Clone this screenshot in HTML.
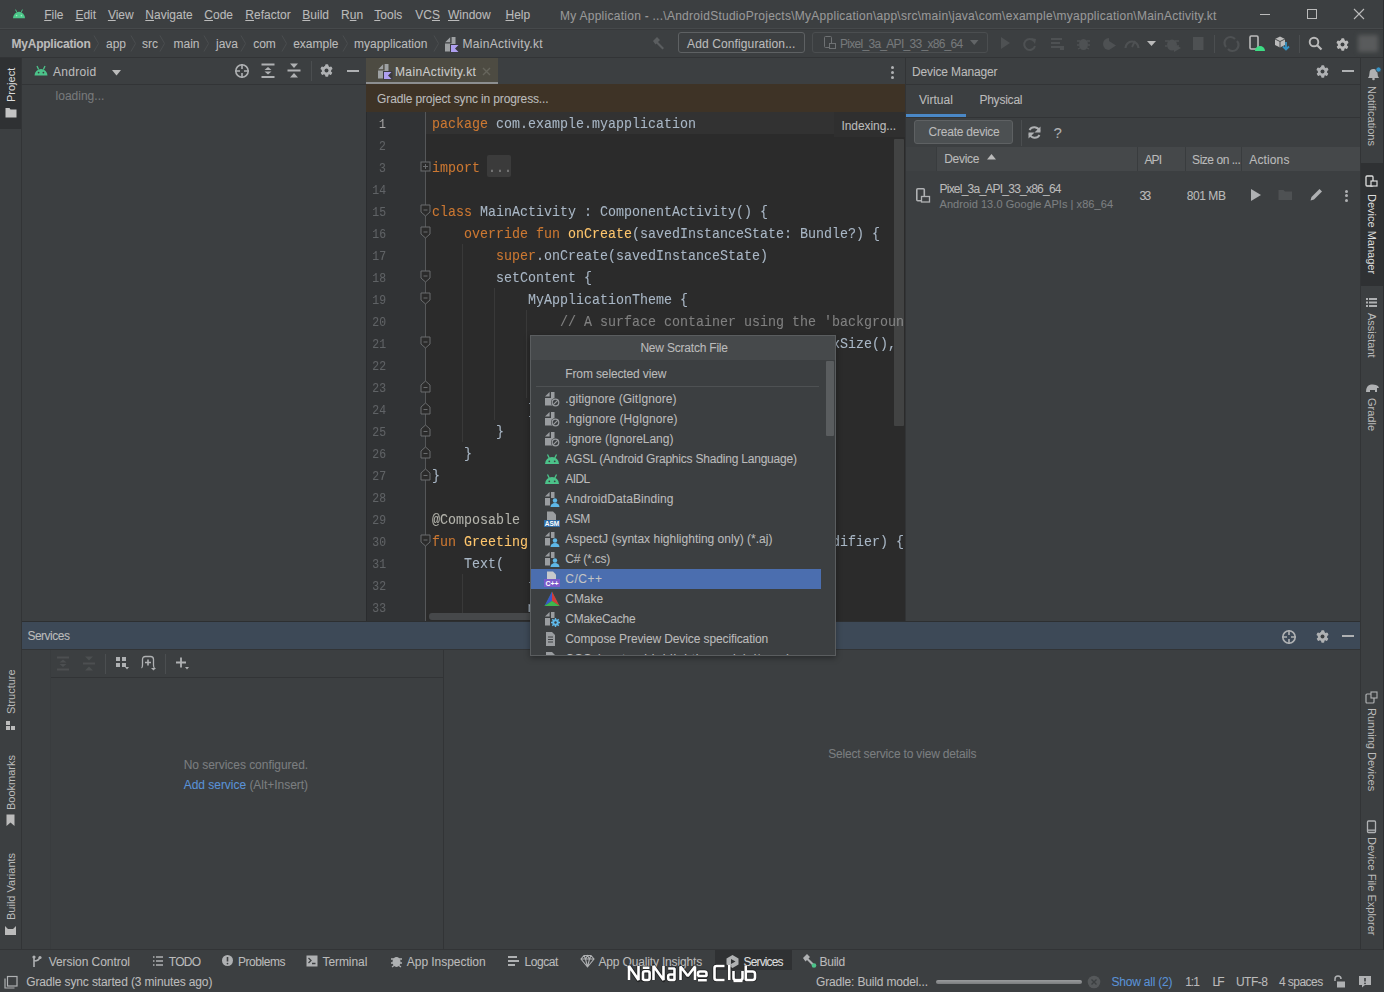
<!DOCTYPE html>
<html><head><meta charset="utf-8">
<style>
*{margin:0;padding:0;box-sizing:border-box}
html,body{width:1384px;height:992px;overflow:hidden;background:#3c3f41;font-family:"Liberation Sans",sans-serif;font-size:12px;color:#bbbbbb}
.a{position:absolute;white-space:nowrap;-webkit-text-stroke:0.08px currentColor}
.bx{position:absolute;overflow:visible}
.mono{font-family:"Liberation Mono",monospace}
u{text-decoration:underline;text-underline-offset:1px;text-decoration-thickness:1px}
.vt{position:absolute;white-space:nowrap;transform-origin:0 0;font-size:11px;line-height:12px}
</style></head>
<body>
<div class="bx" style="left:0px;top:0px;width:1384px;height:28px;background:#3c3f41;"></div>
<div class="bx" style="left:0px;top:28px;width:1384px;height:1px;background:#46494b;"></div>
<div class="bx" style="left:0px;top:29px;width:1384px;height:1px;background:#37393b;"></div>
<div class="bx" style="left:0px;top:30px;width:1384px;height:27px;background:#3c3f41;"></div>
<div class="bx" style="left:0px;top:57px;width:1384px;height:1px;background:#323436;"></div>
<svg class="bx" style="left:12px;top:8px;" width="14" height="12" viewBox="0 0 14 12"><path d="M1 10.3 A6 6.6 0 0 1 13 10.3 Z" fill="#4cc88a"/><path d="M3.6 1.6 L4.6 3.9 M10.4 1.6 L9.4 3.9" stroke="#4cc88a" stroke-width="1"/><circle cx="4.6" cy="7.6" r="0.8" fill="#9fe6c0"/><circle cx="9.4" cy="7.6" r="0.8" fill="#9fe6c0"/></svg>
<div class="a " style="left:44.2px;top:7.34px;font-size:12px;line-height:16px;color:#bbbbbb;"><u>F</u>ile</div>
<div class="a " style="left:75.4px;top:7.34px;font-size:12px;line-height:16px;color:#bbbbbb;"><u>E</u>dit</div>
<div class="a " style="left:107.9px;top:7.34px;font-size:12px;line-height:16px;color:#bbbbbb;"><u>V</u>iew</div>
<div class="a " style="left:145.3px;top:7.34px;font-size:12px;line-height:16px;color:#bbbbbb;"><u>N</u>avigate</div>
<div class="a " style="left:204.3px;top:7.34px;font-size:12px;line-height:16px;color:#bbbbbb;"><u>C</u>ode</div>
<div class="a " style="left:245.3px;top:7.34px;font-size:12px;line-height:16px;color:#bbbbbb;"><u>R</u>efactor</div>
<div class="a " style="left:302.3px;top:7.34px;font-size:12px;line-height:16px;color:#bbbbbb;"><u>B</u>uild</div>
<div class="a " style="left:341.1px;top:7.34px;font-size:12px;line-height:16px;color:#bbbbbb;">R<u>u</u>n</div>
<div class="a " style="left:374.3px;top:7.34px;font-size:12px;line-height:16px;color:#bbbbbb;"><u>T</u>ools</div>
<div class="a " style="left:415.3px;top:7.34px;font-size:12px;line-height:16px;color:#bbbbbb;">VC<u>S</u></div>
<div class="a " style="left:448.0px;top:7.34px;font-size:12px;line-height:16px;color:#bbbbbb;"><u>W</u>indow</div>
<div class="a " style="left:505.5px;top:7.34px;font-size:12px;line-height:16px;color:#bbbbbb;"><u>H</u>elp</div>
<div class="a " style="left:560.0px;top:7.84px;font-size:12px;line-height:16px;color:#999999;letter-spacing:0.264px;">My Application - ...\AndroidStudioProjects\MyApplication\app\src\main\java\com\example\myapplication\MainActivity.kt</div>
<div class="bx" style="left:1260px;top:14px;width:10px;height:1px;background:#bbbbbb;"></div>
<div class="bx" style="left:1307px;top:9px;width:10px;height:10px;background:transparent;border:1px solid #bbbbbb;"></div>
<svg class="bx" style="left:1353px;top:8px;" width="12" height="12" viewBox="0 0 12 12"><path d="M1 1 L11 11 M11 1 L1 11" stroke="#bbbbbb" stroke-width="1.1"/></svg>
<div class="a " style="left:11.5px;top:35.54px;font-size:12px;line-height:16px;color:#bbbbbb;font-weight:bold;letter-spacing:-0.225px;">MyApplication</div>
<svg class="bx" style="left:93.2px;top:35px;" width="7" height="17" viewBox="0 0 7 17"><path d="M1 0.5 L5.5 8.5 L1 16.5" fill="none" stroke="#4a4d4f" stroke-width="1"/></svg>
<svg class="bx" style="left:129.6px;top:35px;" width="7" height="17" viewBox="0 0 7 17"><path d="M1 0.5 L5.5 8.5 L1 16.5" fill="none" stroke="#4a4d4f" stroke-width="1"/></svg>
<svg class="bx" style="left:159px;top:35px;" width="7" height="17" viewBox="0 0 7 17"><path d="M1 0.5 L5.5 8.5 L1 16.5" fill="none" stroke="#4a4d4f" stroke-width="1"/></svg>
<svg class="bx" style="left:202.5px;top:35px;" width="7" height="17" viewBox="0 0 7 17"><path d="M1 0.5 L5.5 8.5 L1 16.5" fill="none" stroke="#4a4d4f" stroke-width="1"/></svg>
<svg class="bx" style="left:240.3px;top:35px;" width="7" height="17" viewBox="0 0 7 17"><path d="M1 0.5 L5.5 8.5 L1 16.5" fill="none" stroke="#4a4d4f" stroke-width="1"/></svg>
<svg class="bx" style="left:281.4px;top:35px;" width="7" height="17" viewBox="0 0 7 17"><path d="M1 0.5 L5.5 8.5 L1 16.5" fill="none" stroke="#4a4d4f" stroke-width="1"/></svg>
<svg class="bx" style="left:341.8px;top:35px;" width="7" height="17" viewBox="0 0 7 17"><path d="M1 0.5 L5.5 8.5 L1 16.5" fill="none" stroke="#4a4d4f" stroke-width="1"/></svg>
<svg class="bx" style="left:433.2px;top:35px;" width="7" height="17" viewBox="0 0 7 17"><path d="M1 0.5 L5.5 8.5 L1 16.5" fill="none" stroke="#4a4d4f" stroke-width="1"/></svg>
<div class="a " style="left:106.0px;top:35.54px;font-size:12px;line-height:16px;color:#bbbbbb;">app</div>
<div class="a " style="left:142.0px;top:35.54px;font-size:12px;line-height:16px;color:#bbbbbb;">src</div>
<div class="a " style="left:173.5px;top:35.54px;font-size:12px;line-height:16px;color:#bbbbbb;">main</div>
<div class="a " style="left:216.0px;top:35.54px;font-size:12px;line-height:16px;color:#bbbbbb;">java</div>
<div class="a " style="left:253.2px;top:35.54px;font-size:12px;line-height:16px;color:#bbbbbb;">com</div>
<div class="a " style="left:293.2px;top:35.54px;font-size:12px;line-height:16px;color:#bbbbbb;">example</div>
<div class="a " style="left:354.0px;top:35.54px;font-size:12px;line-height:16px;color:#bbbbbb;">myapplication</div>
<svg class="bx" style="left:444px;top:36px;" width="16" height="17" viewBox="0 0 16 17"><path d="M1.2 6.2 L6.2 1.2 V6.2 Z" fill="#9ea1a3"/><path d="M1 7.6 H7.6 V1 H11.5 V15.5 H1 Z" fill="#9ea1a3"/><rect x="6" y="8" width="9.5" height="8.5" fill="#3a3a40"/><path d="M7 9 H14.5 L11 12.6 L14.5 16 H7 Z" fill="#ae9ff0"/></svg>
<div class="a " style="left:462.5px;top:35.54px;font-size:12px;line-height:16px;color:#bbbbbb;letter-spacing:0.308px;">MainActivity.kt</div>
<svg class="bx" style="left:651px;top:36px;" width="15" height="15" viewBox="0 0 15 15"><path d="M2 5 L6 1 L9 4 L7 6 L13 12 L11.5 13.5 L5.5 7.5 L4.5 8.5 Z" fill="#5b5e60"/></svg>
<div class="bx" style="left:678px;top:32px;width:127px;height:21px;background:transparent;border:1px solid #5e6163;border-radius:3px;"></div>
<div class="a " style="left:687.0px;top:35.84px;font-size:12px;line-height:16px;color:#bbbbbb;letter-spacing:0.123px;">Add Configuration...</div>
<div class="bx" style="left:812px;top:32px;width:176px;height:21px;background:transparent;border:1px solid #4b4e50;border-radius:3px;"></div>
<svg class="bx" style="left:823px;top:36px;" width="14" height="14" viewBox="0 0 14 14"><rect x="1.5" y="0.5" width="7" height="11" rx="1" fill="none" stroke="#6e7173"/><rect x="6.5" y="7.5" width="6" height="5" fill="#3c3f41" stroke="#6e7173"/></svg>
<div class="a " style="left:840.0px;top:35.84px;font-size:12px;line-height:16px;color:#76797b;letter-spacing:-0.710px;">Pixel_3a_API_33_x86_64</div>
<svg class="bx" style="left:970px;top:40px;" width="9" height="6" viewBox="0 0 9 6"><path d="M0 0 H8.5 L4.25 5 Z" fill="#626567"/></svg>
<svg class="bx" style="left:1000px;top:37px;" width="11" height="12" viewBox="0 0 11 12"><path d="M1 0 L10 6 L1 12 Z" fill="#4e5153"/></svg>
<svg class="bx" style="left:1023px;top:37px;" width="15" height="14" viewBox="0 0 15 14"><path d="M11 4 A5.5 5.5 0 1 0 12 9" fill="none" stroke="#4e5153" stroke-width="2"/><path d="M8 1 L13 2 L12 7 Z" fill="#4e5153"/></svg>
<svg class="bx" style="left:1050px;top:37px;" width="15" height="14" viewBox="0 0 15 14"><rect x="1" y="1" width="11" height="2" fill="#4e5153"/><rect x="1" y="5" width="9" height="2" fill="#4e5153"/><rect x="1" y="9" width="11" height="2" fill="#4e5153"/><rect x="10" y="9" width="4" height="4" fill="#4e5153"/></svg>
<svg class="bx" style="left:1076px;top:36px;" width="15" height="15" viewBox="0 0 15 15"><ellipse cx="7.5" cy="8.5" rx="4.5" ry="5.5" fill="#4e5153"/><path d="M1 5 H4 M11 5 H14 M1 9 H3 M12 9 H14 M2 13 L4 12 M13 13 L11 12" stroke="#4e5153" stroke-width="1.3"/></svg>
<svg class="bx" style="left:1101px;top:36px;" width="16" height="15" viewBox="0 0 16 15"><path d="M8 2 A6 6 0 1 0 8 14 Z" fill="#4e5153"/><path d="M8 5 L15 9.5 L8 14 Z" fill="#4e5153"/></svg>
<svg class="bx" style="left:1124px;top:37px;" width="17" height="13" viewBox="0 0 17 13"><path d="M1.5 11 A6.5 6.5 0 0 1 14.5 11" fill="none" stroke="#4e5153" stroke-width="2.2"/><path d="M8 10 L11 4" stroke="#4e5153" stroke-width="1.8"/></svg>
<svg class="bx" style="left:1147px;top:41px;" width="10" height="6" viewBox="0 0 10 6"><path d="M0 0 H9 L4.5 5 Z" fill="#bbbbbb"/></svg>
<svg class="bx" style="left:1165px;top:36px;" width="16" height="16" viewBox="0 0 16 16"><ellipse cx="7" cy="9" rx="5" ry="5.5" fill="#4e5153"/><path d="M0 5 H4 M10 5 H14 M0 10 H2 M12 10 H14" stroke="#4e5153" stroke-width="1.3"/><path d="M9 8 L16 12 L9 16 Z" fill="#4e5153"/></svg>
<svg class="bx" style="left:1193px;top:37px;" width="11" height="13" viewBox="0 0 11 13"><rect x="0" y="0" width="10.5" height="13" fill="#4e5153"/></svg>
<div class="bx" style="left:1214px;top:35px;width:1px;height:18px;background:#4b4e50;"></div>
<svg class="bx" style="left:1223px;top:36px;" width="17" height="16" viewBox="0 0 17 16"><path d="M3 11 A6 6 0 0 1 12 3" fill="none" stroke="#4e5153" stroke-width="2.2"/><path d="M14 5 A6 6 0 0 1 5 13" fill="none" stroke="#4e5153" stroke-width="2.2"/></svg>
<svg class="bx" style="left:1249px;top:35px;" width="16" height="17" viewBox="0 0 16 17"><rect x="1" y="1" width="8" height="13" rx="1.2" fill="none" stroke="#bbbbbb" stroke-width="1.6"/><path d="M6 16 A5 5 0 0 1 16 16 Z" fill="#3ddc84"/></svg>
<svg class="bx" style="left:1274px;top:35px;" width="17" height="17" viewBox="0 0 17 17"><path d="M1 4 L6 1.5 L11 4 L11 10 L6 12.5 L1 10 Z" fill="#bbbbbb"/><path d="M6 6.5 V12.5 M1 4 L6 6.5 L11 4" stroke="#3c3f41" stroke-width="0.9" fill="none"/><path d="M12 7 V14 M9 11.5 L12 14.5 L15 11.5" stroke="#3592c4" stroke-width="1.8" fill="none"/></svg>
<div class="bx" style="left:1299px;top:35px;width:1px;height:18px;background:#4b4e50;"></div>
<svg class="bx" style="left:1308px;top:36px;" width="15" height="15" viewBox="0 0 15 15"><circle cx="6" cy="6" r="4.3" fill="none" stroke="#bbbbbb" stroke-width="1.9"/><path d="M9.2 9.2 L13.5 13.5" stroke="#bbbbbb" stroke-width="2.2"/></svg>
<svg class="bx" style="left:1335.5px;top:37.5px;" width="13" height="13" viewBox="0 0 13 13"><rect x="5.15" y="0.3" width="3.2" height="12.40" rx="1" fill="#bbbbbb" transform="rotate(0 6.5 6.5)"/><rect x="5.15" y="0.3" width="3.2" height="12.40" rx="1" fill="#bbbbbb" transform="rotate(60 6.5 6.5)"/><rect x="5.15" y="0.3" width="3.2" height="12.40" rx="1" fill="#bbbbbb" transform="rotate(120 6.5 6.5)"/><circle cx="6.5" cy="6.5" r="4.68" fill="#bbbbbb"/><circle cx="6.5" cy="6.5" r="1.95" fill="#3c3f41"/></svg>
<div class="bx" style="left:1358px;top:35px;width:20px;height:17px;background:#595b5c;filter:blur(2px);"></div>
<div class="bx" style="left:0px;top:58px;width:21px;height:892px;background:#3c3f41;"></div>
<div class="bx" style="left:21px;top:58px;width:1px;height:892px;background:#323436;"></div>
<div class="bx" style="left:0px;top:58px;width:21px;height:71px;background:#2f3133;"></div>
<div class="vt" style="left:5px;top:102px;color:#dddddd;font-size:11px;transform:rotate(-90deg)">Project</div>
<svg class="bx" style="left:5px;top:107px;" width="12" height="11" viewBox="0 0 12 11"><path d="M0.5 1 H4.5 L5.5 2.5 H11.5 V10.5 H0.5 Z" fill="#c4c4c4"/></svg>
<div class="vt" style="left:5px;top:714px;color:#bbbbbb;font-size:11px;transform:rotate(-90deg)">Structure</div>
<svg class="bx" style="left:5px;top:720px;" width="11" height="11" viewBox="0 0 11 11"><rect x="1" y="1" width="4" height="4" fill="#bbbbbb"/><rect x="6" y="6" width="4" height="4" fill="#bbbbbb"/><rect x="1" y="6" width="4" height="4" fill="#bbbbbb"/></svg>
<div class="vt" style="left:5px;top:809.5px;color:#bbbbbb;font-size:11px;transform:rotate(-90deg)">Bookmarks</div>
<svg class="bx" style="left:5px;top:814px;" width="11" height="13" viewBox="0 0 11 13"><path d="M1.5 0.5 H9.5 V12 L5.5 8.5 L1.5 12 Z" fill="#bbbbbb"/></svg>
<div class="vt" style="left:5px;top:920px;color:#bbbbbb;font-size:11px;transform:rotate(-90deg)">Build Variants</div>
<svg class="bx" style="left:4px;top:924px;" width="13" height="12" viewBox="0 0 13 12"><path d="M1 2 L4 5 H9 L12 2 V11 H1 Z" fill="#bbbbbb"/></svg>
<div class="bx" style="left:22px;top:58px;width:344px;height:564px;background:#3c3f41;"></div>
<div class="bx" style="left:22px;top:84px;width:344px;height:1px;background:#323436;"></div>
<svg class="bx" style="left:34px;top:65px;" width="14" height="11" viewBox="0 0 14 11"><path d="M0.5 10.5 A6.5 6.5 0 0 1 13.5 10.5 Z" fill="#4cc38a"/><line x1="3" y1="1" x2="4.6" y2="4.5" stroke="#4cc38a" stroke-width="1.3"/><line x1="11" y1="1" x2="9.4" y2="4.5" stroke="#4cc38a" stroke-width="1.3"/><circle cx="4.6" cy="7.6" r="0.9" fill="#3c3f41"/><circle cx="9.4" cy="7.6" r="0.9" fill="#3c3f41"/></svg>
<div class="a " style="left:53.0px;top:64.04px;font-size:12px;line-height:16px;color:#bbbbbb;letter-spacing:0.306px;">Android</div>
<svg class="bx" style="left:111.5px;top:69.5px;" width="9" height="6" viewBox="0 0 9 6"><path d="M0 0 H9 L4.5 5.5 Z" fill="#bbbbbb"/></svg>
<svg class="bx" style="left:234px;top:63px;" width="16" height="16" viewBox="0 0 16 16"><circle cx="8" cy="8" r="6.2" fill="none" stroke="#afb1b3" stroke-width="1.6"/><path d="M8 1 V6 M8 10 V15 M1 8 H6 M10 8 H15" stroke="#afb1b3" stroke-width="1.6"/></svg>
<svg class="bx" style="left:261px;top:63px;" width="14" height="16" viewBox="0 0 14 16"><rect x="0.5" y="0.5" width="13" height="2" fill="#afb1b3"/><rect x="0.5" y="13" width="13" height="2" fill="#afb1b3"/><path d="M3.5 7 L7 4 L10.5 7 Z M3.5 8.5 L7 11.5 L10.5 8.5 Z" fill="#afb1b3"/></svg>
<svg class="bx" style="left:287px;top:63px;" width="14" height="16" viewBox="0 0 14 16"><rect x="0.5" y="6.5" width="13" height="2" fill="#afb1b3"/><path d="M3 0.5 H11 L7 5 Z M3 14.5 H11 L7 10 Z" fill="#afb1b3"/></svg>
<div class="bx" style="left:311px;top:61px;width:1px;height:20px;background:#4b4e50;"></div>
<svg class="bx" style="left:320px;top:64px;" width="13" height="13" viewBox="0 0 13 13"><rect x="5.15" y="0.3" width="3.2" height="12.40" rx="1" fill="#afb1b3" transform="rotate(0 6.5 6.5)"/><rect x="5.15" y="0.3" width="3.2" height="12.40" rx="1" fill="#afb1b3" transform="rotate(60 6.5 6.5)"/><rect x="5.15" y="0.3" width="3.2" height="12.40" rx="1" fill="#afb1b3" transform="rotate(120 6.5 6.5)"/><circle cx="6.5" cy="6.5" r="4.68" fill="#afb1b3"/><circle cx="6.5" cy="6.5" r="1.95" fill="#3c3f41"/></svg>
<div class="bx" style="left:346.5px;top:70px;width:12.5px;height:2px;background:#afb1b3;"></div>
<div class="a " style="left:55.6px;top:87.84px;font-size:12px;line-height:16px;color:#787a7c;letter-spacing:-0.000px;">loading...</div>
<div class="bx" style="left:366px;top:58px;width:539px;height:27px;background:#3c3f41;"></div>
<div class="bx" style="left:366px;top:58px;width:132px;height:27px;background:#4d4b42;"></div>
<div class="bx" style="left:366px;top:82px;width:132px;height:3px;background:#8c8e90;"></div>
<svg class="bx" style="left:377px;top:63px;" width="16" height="17" viewBox="0 0 16 17"><path d="M1.2 6.2 L6.2 1.2 V6.2 Z" fill="#9ea1a3"/><path d="M1 7.6 H7.6 V1 H11.5 V15.5 H1 Z" fill="#9ea1a3"/><rect x="6" y="8" width="9.5" height="8.5" fill="#3a3a40"/><path d="M7 9 H14.5 L11 12.6 L14.5 16 H7 Z" fill="#ae9ff0"/></svg>
<div class="a " style="left:395.0px;top:64.34px;font-size:12px;line-height:16px;color:#cccccc;letter-spacing:0.365px;">MainActivity.kt</div>
<svg class="bx" style="left:482px;top:67px;" width="9" height="9" viewBox="0 0 9 9"><path d="M1 1 L8 8 M8 1 L1 8" stroke="#66655c" stroke-width="1.4"/></svg>
<div class="bx" style="left:891px;top:66px;width:3px;height:3px;background:#afb1b3;border-radius:50%;"></div>
<div class="bx" style="left:891px;top:71px;width:3px;height:3px;background:#afb1b3;border-radius:50%;"></div>
<div class="bx" style="left:891px;top:76px;width:3px;height:3px;background:#afb1b3;border-radius:50%;"></div>
<div class="bx" style="left:366px;top:84px;width:539px;height:28px;background:#3e3326;"></div>
<div class="a " style="left:377.1px;top:91.34px;font-size:12px;line-height:16px;color:#bbbbbb;letter-spacing:-0.139px;">Gradle project sync in progress...</div>
<div class="bx" style="left:366px;top:112px;width:539px;height:510px;background:#2b2b2b;"></div>
<div class="bx" style="left:366px;top:112px;width:60px;height:510px;background:#313335;"></div>
<div class="bx" style="left:425px;top:112px;width:1px;height:510px;background:#555759;"></div>
<div class="bx" style="left:366px;top:112px;width:1px;height:510px;background:#2a2c2e;"></div>
<div class="bx" style="left:426px;top:112px;width:478px;height:22px;background:#323232;"></div>
<div class="bx" style="left:426px;top:112px;width:478px;height:510px;overflow:hidden">
<div class="bx" style="left:61px;top:43px;width:24px;height:22px;background:#3b3b3b;border-radius:2px"></div>
<div class="bx" style="left:36px;top:132px;width:1px;height:198px;background:#393939"></div>
<div class="bx" style="left:68px;top:176px;width:1px;height:132px;background:#393939"></div>
<div class="bx" style="left:100px;top:198px;width:1px;height:88px;background:#393939"></div>
<div class="bx" style="left:36px;top:462px;width:1px;height:44px;background:#393939"></div>
<div class="a mono" style="left:6px;top:5px;font-size:13.33px;line-height:16px;transform:scaleY(1.11);transform-origin:0 11px"><span style="color:#cc7832">package&nbsp;</span><span style="color:#a9b7c6">com.example.myapplication</span></div>
<div class="a mono" style="left:6px;top:27px;font-size:13.33px;line-height:16px;transform:scaleY(1.11);transform-origin:0 11px"></div>
<div class="a mono" style="left:6px;top:49px;font-size:13.33px;line-height:16px;transform:scaleY(1.11);transform-origin:0 11px"><span style="color:#cc7832">import&nbsp;</span><span style="color:#808080">...</span></div>
<div class="a mono" style="left:6px;top:71px;font-size:13.33px;line-height:16px;transform:scaleY(1.11);transform-origin:0 11px"></div>
<div class="a mono" style="left:6px;top:93px;font-size:13.33px;line-height:16px;transform:scaleY(1.11);transform-origin:0 11px"><span style="color:#cc7832">class&nbsp;</span><span style="color:#a9b7c6">MainActivity&nbsp;:&nbsp;ComponentActivity()&nbsp;{</span></div>
<div class="a mono" style="left:6px;top:115px;font-size:13.33px;line-height:16px;transform:scaleY(1.11);transform-origin:0 11px"><span style="color:#cc7832">&nbsp;&nbsp;&nbsp;&nbsp;override&nbsp;fun&nbsp;</span><span style="color:#ffc66d">onCreate</span><span style="color:#a9b7c6">(savedInstanceState:&nbsp;Bundle?)&nbsp;{</span></div>
<div class="a mono" style="left:6px;top:137px;font-size:13.33px;line-height:16px;transform:scaleY(1.11);transform-origin:0 11px"><span style="color:#cc7832">&nbsp;&nbsp;&nbsp;&nbsp;&nbsp;&nbsp;&nbsp;&nbsp;super</span><span style="color:#a9b7c6">.onCreate(savedInstanceState)</span></div>
<div class="a mono" style="left:6px;top:159px;font-size:13.33px;line-height:16px;transform:scaleY(1.11);transform-origin:0 11px"><span style="color:#a9b7c6">&nbsp;&nbsp;&nbsp;&nbsp;&nbsp;&nbsp;&nbsp;&nbsp;setContent&nbsp;{</span></div>
<div class="a mono" style="left:6px;top:181px;font-size:13.33px;line-height:16px;transform:scaleY(1.11);transform-origin:0 11px"><span style="color:#a9b7c6">&nbsp;&nbsp;&nbsp;&nbsp;&nbsp;&nbsp;&nbsp;&nbsp;&nbsp;&nbsp;&nbsp;&nbsp;MyApplicationTheme&nbsp;{</span></div>
<div class="a mono" style="left:6px;top:203px;font-size:13.33px;line-height:16px;transform:scaleY(1.11);transform-origin:0 11px"><span style="color:#808080">&nbsp;&nbsp;&nbsp;&nbsp;&nbsp;&nbsp;&nbsp;&nbsp;&nbsp;&nbsp;&nbsp;&nbsp;&nbsp;&nbsp;&nbsp;&nbsp;//&nbsp;A&nbsp;surface&nbsp;container&nbsp;using&nbsp;the&nbsp;'background'&nbsp;color&nbsp;from&nbsp;the&nbsp;theme</span></div>
<div class="a mono" style="left:6px;top:225px;font-size:13.33px;line-height:16px;transform:scaleY(1.11);transform-origin:0 11px"><span style="color:#a9b7c6">&nbsp;&nbsp;&nbsp;&nbsp;&nbsp;&nbsp;&nbsp;&nbsp;&nbsp;&nbsp;&nbsp;&nbsp;&nbsp;&nbsp;&nbsp;&nbsp;Surface(modifier&nbsp;=&nbsp;Modifier.fillMaxSize(),&nbsp;</span><span style="color:#cc7832">color</span></div>
<div class="a mono" style="left:6px;top:247px;font-size:13.33px;line-height:16px;transform:scaleY(1.11);transform-origin:0 11px"></div>
<div class="a mono" style="left:6px;top:269px;font-size:13.33px;line-height:16px;transform:scaleY(1.11);transform-origin:0 11px"></div>
<div class="a mono" style="left:6px;top:291px;font-size:13.33px;line-height:16px;transform:scaleY(1.11);transform-origin:0 11px"><span style="color:#a9b7c6">&nbsp;&nbsp;&nbsp;&nbsp;&nbsp;&nbsp;&nbsp;&nbsp;&nbsp;&nbsp;&nbsp;&nbsp;}</span></div>
<div class="a mono" style="left:6px;top:313px;font-size:13.33px;line-height:16px;transform:scaleY(1.11);transform-origin:0 11px"><span style="color:#a9b7c6">&nbsp;&nbsp;&nbsp;&nbsp;&nbsp;&nbsp;&nbsp;&nbsp;}</span></div>
<div class="a mono" style="left:6px;top:335px;font-size:13.33px;line-height:16px;transform:scaleY(1.11);transform-origin:0 11px"><span style="color:#a9b7c6">&nbsp;&nbsp;&nbsp;&nbsp;}</span></div>
<div class="a mono" style="left:6px;top:357px;font-size:13.33px;line-height:16px;transform:scaleY(1.11);transform-origin:0 11px"><span style="color:#a9b7c6">}</span></div>
<div class="a mono" style="left:6px;top:379px;font-size:13.33px;line-height:16px;transform:scaleY(1.11);transform-origin:0 11px"></div>
<div class="a mono" style="left:6px;top:401px;font-size:13.33px;line-height:16px;transform:scaleY(1.11);transform-origin:0 11px"><span style="color:#b4b4ac">@Composable</span></div>
<div class="a mono" style="left:6px;top:423px;font-size:13.33px;line-height:16px;transform:scaleY(1.11);transform-origin:0 11px"><span style="color:#cc7832">fun&nbsp;</span><span style="color:#ffc66d">Greeting</span><span style="color:#a9b7c6">(name:&nbsp;String,&nbsp;modifier:&nbsp;Modifier&nbsp;=&nbsp;Modifier)&nbsp;{</span></div>
<div class="a mono" style="left:6px;top:445px;font-size:13.33px;line-height:16px;transform:scaleY(1.11);transform-origin:0 11px"><span style="color:#a9b7c6">&nbsp;&nbsp;&nbsp;&nbsp;Text(</span></div>
<div class="a mono" style="left:6px;top:467px;font-size:13.33px;line-height:16px;transform:scaleY(1.11);transform-origin:0 11px"><span style="color:#a9b7c6">&nbsp;&nbsp;&nbsp;&nbsp;&nbsp;&nbsp;&nbsp;&nbsp;&nbsp;&nbsp;&nbsp;&nbsp;text&nbsp;=&nbsp;"Hello&nbsp;$name!",</span></div>
<div class="a mono" style="left:6px;top:489px;font-size:13.33px;line-height:16px;transform:scaleY(1.11);transform-origin:0 11px"><span style="color:#a9b7c6">&nbsp;&nbsp;&nbsp;&nbsp;&nbsp;&nbsp;&nbsp;&nbsp;&nbsp;&nbsp;&nbsp;&nbsp;modifier&nbsp;=&nbsp;modifier</span></div>
</div>
<div class="a mono" style="left:379.1px;top:118px;font-size:11.4px;line-height:14px;color:#a4a3a3;transform:scaleY(1.2);transform-origin:0 10px">1</div>
<div class="a mono" style="left:379.1px;top:140px;font-size:11.4px;line-height:14px;color:#606366;transform:scaleY(1.2);transform-origin:0 10px">2</div>
<div class="a mono" style="left:379.1px;top:162px;font-size:11.4px;line-height:14px;color:#606366;transform:scaleY(1.2);transform-origin:0 10px">3</div>
<div class="a mono" style="left:372.3px;top:184px;font-size:11.4px;line-height:14px;color:#606366;transform:scaleY(1.2);transform-origin:0 10px">14</div>
<div class="a mono" style="left:372.3px;top:206px;font-size:11.4px;line-height:14px;color:#606366;transform:scaleY(1.2);transform-origin:0 10px">15</div>
<div class="a mono" style="left:372.3px;top:228px;font-size:11.4px;line-height:14px;color:#606366;transform:scaleY(1.2);transform-origin:0 10px">16</div>
<div class="a mono" style="left:372.3px;top:250px;font-size:11.4px;line-height:14px;color:#606366;transform:scaleY(1.2);transform-origin:0 10px">17</div>
<div class="a mono" style="left:372.3px;top:272px;font-size:11.4px;line-height:14px;color:#606366;transform:scaleY(1.2);transform-origin:0 10px">18</div>
<div class="a mono" style="left:372.3px;top:294px;font-size:11.4px;line-height:14px;color:#606366;transform:scaleY(1.2);transform-origin:0 10px">19</div>
<div class="a mono" style="left:372.3px;top:316px;font-size:11.4px;line-height:14px;color:#606366;transform:scaleY(1.2);transform-origin:0 10px">20</div>
<div class="a mono" style="left:372.3px;top:338px;font-size:11.4px;line-height:14px;color:#606366;transform:scaleY(1.2);transform-origin:0 10px">21</div>
<div class="a mono" style="left:372.3px;top:360px;font-size:11.4px;line-height:14px;color:#606366;transform:scaleY(1.2);transform-origin:0 10px">22</div>
<div class="a mono" style="left:372.3px;top:382px;font-size:11.4px;line-height:14px;color:#606366;transform:scaleY(1.2);transform-origin:0 10px">23</div>
<div class="a mono" style="left:372.3px;top:404px;font-size:11.4px;line-height:14px;color:#606366;transform:scaleY(1.2);transform-origin:0 10px">24</div>
<div class="a mono" style="left:372.3px;top:426px;font-size:11.4px;line-height:14px;color:#606366;transform:scaleY(1.2);transform-origin:0 10px">25</div>
<div class="a mono" style="left:372.3px;top:448px;font-size:11.4px;line-height:14px;color:#606366;transform:scaleY(1.2);transform-origin:0 10px">26</div>
<div class="a mono" style="left:372.3px;top:470px;font-size:11.4px;line-height:14px;color:#606366;transform:scaleY(1.2);transform-origin:0 10px">27</div>
<div class="a mono" style="left:372.3px;top:492px;font-size:11.4px;line-height:14px;color:#606366;transform:scaleY(1.2);transform-origin:0 10px">28</div>
<div class="a mono" style="left:372.3px;top:514px;font-size:11.4px;line-height:14px;color:#606366;transform:scaleY(1.2);transform-origin:0 10px">29</div>
<div class="a mono" style="left:372.3px;top:536px;font-size:11.4px;line-height:14px;color:#606366;transform:scaleY(1.2);transform-origin:0 10px">30</div>
<div class="a mono" style="left:372.3px;top:558px;font-size:11.4px;line-height:14px;color:#606366;transform:scaleY(1.2);transform-origin:0 10px">31</div>
<div class="a mono" style="left:372.3px;top:580px;font-size:11.4px;line-height:14px;color:#606366;transform:scaleY(1.2);transform-origin:0 10px">32</div>
<div class="a mono" style="left:372.3px;top:602px;font-size:11.4px;line-height:14px;color:#606366;transform:scaleY(1.2);transform-origin:0 10px">33</div>
<svg class="bx" style="left:420px;top:161px;" width="11" height="11" viewBox="0 0 11 11"><rect x="1" y="1" width="9" height="9" fill="#2b2b2b" stroke="#6a6c6e"/><path d="M3 5.5 H8 M5.5 3 V8" stroke="#6a6c6e"/></svg>
<svg class="bx" style="left:420px;top:204px;" width="11" height="13" viewBox="0 0 11 13"><path d="M1 1 H10 V8 L5.5 12 L1 8 Z" fill="#2b2b2b" stroke="#6a6c6e" stroke-width="1"/><path d="M3.5 6 H7.5" stroke="#6a6c6e"/></svg>
<svg class="bx" style="left:420px;top:226px;" width="11" height="13" viewBox="0 0 11 13"><path d="M1 1 H10 V8 L5.5 12 L1 8 Z" fill="#2b2b2b" stroke="#6a6c6e" stroke-width="1"/><path d="M3.5 6 H7.5" stroke="#6a6c6e"/></svg>
<svg class="bx" style="left:420px;top:270px;" width="11" height="13" viewBox="0 0 11 13"><path d="M1 1 H10 V8 L5.5 12 L1 8 Z" fill="#2b2b2b" stroke="#6a6c6e" stroke-width="1"/><path d="M3.5 6 H7.5" stroke="#6a6c6e"/></svg>
<svg class="bx" style="left:420px;top:292px;" width="11" height="13" viewBox="0 0 11 13"><path d="M1 1 H10 V8 L5.5 12 L1 8 Z" fill="#2b2b2b" stroke="#6a6c6e" stroke-width="1"/><path d="M3.5 6 H7.5" stroke="#6a6c6e"/></svg>
<svg class="bx" style="left:420px;top:336px;" width="11" height="13" viewBox="0 0 11 13"><path d="M1 1 H10 V8 L5.5 12 L1 8 Z" fill="#2b2b2b" stroke="#6a6c6e" stroke-width="1"/><path d="M3.5 6 H7.5" stroke="#6a6c6e"/></svg>
<svg class="bx" style="left:420px;top:380px;" width="11" height="13" viewBox="0 0 11 13"><path d="M1 12 H10 V5 L5.5 1 L1 5 Z" fill="#2b2b2b" stroke="#6a6c6e" stroke-width="1"/><path d="M3.5 7.5 H7.5" stroke="#6a6c6e"/></svg>
<svg class="bx" style="left:420px;top:402px;" width="11" height="13" viewBox="0 0 11 13"><path d="M1 12 H10 V5 L5.5 1 L1 5 Z" fill="#2b2b2b" stroke="#6a6c6e" stroke-width="1"/><path d="M3.5 7.5 H7.5" stroke="#6a6c6e"/></svg>
<svg class="bx" style="left:420px;top:424px;" width="11" height="13" viewBox="0 0 11 13"><path d="M1 12 H10 V5 L5.5 1 L1 5 Z" fill="#2b2b2b" stroke="#6a6c6e" stroke-width="1"/><path d="M3.5 7.5 H7.5" stroke="#6a6c6e"/></svg>
<svg class="bx" style="left:420px;top:446px;" width="11" height="13" viewBox="0 0 11 13"><path d="M1 12 H10 V5 L5.5 1 L1 5 Z" fill="#2b2b2b" stroke="#6a6c6e" stroke-width="1"/><path d="M3.5 7.5 H7.5" stroke="#6a6c6e"/></svg>
<svg class="bx" style="left:420px;top:468px;" width="11" height="13" viewBox="0 0 11 13"><path d="M1 12 H10 V5 L5.5 1 L1 5 Z" fill="#2b2b2b" stroke="#6a6c6e" stroke-width="1"/><path d="M3.5 7.5 H7.5" stroke="#6a6c6e"/></svg>
<svg class="bx" style="left:420px;top:534px;" width="11" height="13" viewBox="0 0 11 13"><path d="M1 1 H10 V8 L5.5 12 L1 8 Z" fill="#2b2b2b" stroke="#6a6c6e" stroke-width="1"/><path d="M3.5 6 H7.5" stroke="#6a6c6e"/></svg>
<div class="bx" style="left:834px;top:112px;width:71px;height:25px;background:#2f2f2f;"></div>
<div class="a " style="left:841.4px;top:117.84px;font-size:12px;line-height:16px;color:#bbbbbb;letter-spacing:-0.057px;">Indexing...</div>
<div class="bx" style="left:894px;top:139px;width:10px;height:287px;background:rgba(170,175,180,0.18);border-radius:1px;"></div>
<div class="bx" style="left:429px;top:613px;width:300px;height:7px;background:#46484a;border-radius:3px;"></div>
<div class="bx" style="left:905px;top:58px;width:1px;height:564px;background:#323436;"></div>
<div class="bx" style="left:906px;top:58px;width:454px;height:564px;background:#3c3f41;"></div>
<div class="a " style="left:912.0px;top:64.04px;font-size:12px;line-height:16px;color:#bbbbbb;letter-spacing:-0.137px;">Device Manager</div>
<svg class="bx" style="left:1315.5px;top:65px;" width="13" height="13" viewBox="0 0 13 13"><rect x="5.15" y="0.3" width="3.2" height="12.40" rx="1" fill="#afb1b3" transform="rotate(0 6.5 6.5)"/><rect x="5.15" y="0.3" width="3.2" height="12.40" rx="1" fill="#afb1b3" transform="rotate(60 6.5 6.5)"/><rect x="5.15" y="0.3" width="3.2" height="12.40" rx="1" fill="#afb1b3" transform="rotate(120 6.5 6.5)"/><circle cx="6.5" cy="6.5" r="4.68" fill="#afb1b3"/><circle cx="6.5" cy="6.5" r="1.95" fill="#3c3f41"/></svg>
<div class="bx" style="left:1341.5px;top:70px;width:12.5px;height:2px;background:#afb1b3;"></div>
<div class="bx" style="left:906px;top:84px;width:454px;height:1px;background:#323436;"></div>
<div class="a " style="left:919.0px;top:91.84px;font-size:12px;line-height:16px;color:#bbbbbb;letter-spacing:0.017px;">Virtual</div>
<div class="a " style="left:979.4px;top:91.84px;font-size:12px;line-height:16px;color:#bbbbbb;letter-spacing:-0.226px;">Physical</div>
<div class="bx" style="left:906px;top:114px;width:60px;height:3px;background:#4a88c7;"></div>
<div class="bx" style="left:906px;top:117px;width:454px;height:1px;background:#323436;"></div>
<div class="bx" style="left:914px;top:120px;width:99px;height:24px;background:#4c5052;border:1px solid #5e6163;border-radius:3px;"></div>
<div class="a " style="left:928.6px;top:124.34px;font-size:12px;line-height:16px;color:#bbbbbb;letter-spacing:-0.237px;">Create device</div>
<div class="bx" style="left:1021px;top:120px;width:1px;height:26px;background:#4b4e50;"></div>
<svg class="bx" style="left:1027px;top:125px;" width="15" height="15" viewBox="0 0 15 15"><path d="M12.5 6 A5.5 5.5 0 0 0 2.5 5" fill="none" stroke="#afb1b3" stroke-width="1.9"/><path d="M2.5 9 A5.5 5.5 0 0 0 12.5 10" fill="none" stroke="#afb1b3" stroke-width="1.9"/><path d="M13.5 1.5 V7.5 H7.5 Z" fill="#afb1b3"/><path d="M1.5 13.5 V7.5 H7.5 Z" fill="#afb1b3"/></svg>
<div class="a " style="left:1053.5px;top:125.30px;font-size:15px;line-height:16px;color:#afb1b3;">?</div>
<div class="bx" style="left:906px;top:147px;width:454px;height:24px;background:#45484a;"></div>
<div class="bx" style="left:906px;top:147px;width:30px;height:24px;background:#3f4244;"></div>
<div class="bx" style="left:936px;top:147px;width:1px;height:24px;background:#393c3e;"></div>
<div class="bx" style="left:1137px;top:147px;width:1px;height:24px;background:#393c3e;"></div>
<div class="bx" style="left:1185px;top:147px;width:1px;height:24px;background:#393c3e;"></div>
<div class="bx" style="left:1241px;top:147px;width:1px;height:24px;background:#393c3e;"></div>
<div class="a " style="left:944.2px;top:151.34px;font-size:12px;line-height:16px;color:#bbbbbb;letter-spacing:-0.276px;">Device</div>
<svg class="bx" style="left:986.5px;top:154px;" width="9" height="6" viewBox="0 0 9 6"><path d="M0 5.5 H9 L4.5 0 Z" fill="#bbbbbb"/></svg>
<div class="a " style="left:1144.4px;top:151.84px;font-size:12px;line-height:16px;color:#bbbbbb;letter-spacing:-0.771px;">API</div>
<div class="a " style="left:1192.1px;top:151.84px;font-size:12px;line-height:16px;color:#bbbbbb;letter-spacing:-0.466px;">Size on ...</div>
<div class="a " style="left:1249.3px;top:151.84px;font-size:12px;line-height:16px;color:#bbbbbb;letter-spacing:0.125px;">Actions</div>
<svg class="bx" style="left:915px;top:187px;" width="16" height="17" viewBox="0 0 16 17"><rect x="1.8" y="1.8" width="7.5" height="12" rx="1" fill="none" stroke="#afb1b3" stroke-width="1.6"/><rect x="6.5" y="9.5" width="8" height="5.5" fill="#3c3f41" stroke="#afb1b3" stroke-width="1.3"/></svg>
<div class="a " style="left:939.5px;top:180.84px;font-size:12px;line-height:16px;color:#bbbbbb;letter-spacing:-0.767px;">Pixel_3a_API_33_x86_64</div>
<div class="a " style="left:939.5px;top:196.49px;font-size:11px;line-height:16px;color:#7d8082;letter-spacing:0.058px;">Android 13.0 Google APIs | x86_64</div>
<div class="a " style="left:1139.6px;top:188.34px;font-size:12px;line-height:16px;color:#bbbbbb;letter-spacing:-1.848px;">33</div>
<div class="a " style="left:1186.8px;top:188.34px;font-size:12px;line-height:16px;color:#bbbbbb;letter-spacing:-0.451px;">801 MB</div>
<svg class="bx" style="left:1250px;top:188px;" width="12" height="14" viewBox="0 0 12 14"><path d="M1 1 L11 7 L1 13 Z" fill="#afb1b3"/></svg>
<svg class="bx" style="left:1278px;top:189px;" width="16" height="12" viewBox="0 0 16 12"><path d="M0.5 1 H5.5 L7 2.5 H14 V11 H0.5 Z" fill="#4e5153"/></svg>
<svg class="bx" style="left:1309px;top:187px;" width="15" height="15" viewBox="0 0 15 15"><path d="M1.5 13.5 L2.5 10 L10.5 2 L13 4.5 L5 12.5 Z" fill="#afb1b3"/></svg>
<div class="bx" style="left:1344.5px;top:189.5px;width:3px;height:3px;background:#afb1b3;border-radius:50%;"></div>
<div class="bx" style="left:1344.5px;top:194px;width:3px;height:3px;background:#afb1b3;border-radius:50%;"></div>
<div class="bx" style="left:1344.5px;top:198.5px;width:3px;height:3px;background:#afb1b3;border-radius:50%;"></div>
<div class="bx" style="left:1360px;top:58px;width:1px;height:892px;background:#323436;"></div>
<div class="bx" style="left:1361px;top:58px;width:23px;height:892px;background:#3c3f41;"></div>
<div class="bx" style="left:1361px;top:163px;width:23px;height:123px;background:#2f3133;"></div>
<svg class="bx" style="left:1366px;top:66px;" width="16" height="15" viewBox="0 0 16 15"><path d="M2 12 Q3.5 10.5 3.5 7 A4 4 0 0 1 11.5 7 Q11.5 10.5 13 12 Z" fill="#afb1b3"/><circle cx="7.5" cy="13" r="1.3" fill="#afb1b3"/><circle cx="12.5" cy="3.5" r="2.6" fill="#3592c4" stroke="#3c3f41" stroke-width="0.8"/></svg>
<div class="vt" style="left:1378px;top:85.5px;color:#bbbbbb;font-size:11px;transform:rotate(90deg)">Notifications</div>
<svg class="bx" style="left:1365px;top:175px;" width="14" height="13" viewBox="0 0 14 13"><rect x="1" y="1" width="7" height="10" rx="1" fill="none" stroke="#dddddd" stroke-width="1.3"/><rect x="6" y="6" width="6" height="5" fill="#2f3133" stroke="#dddddd" stroke-width="1.2"/></svg>
<div class="vt" style="left:1378px;top:193.5px;color:#dddddd;font-size:11px;transform:rotate(90deg)">Device Manager</div>
<svg class="bx" style="left:1365px;top:297px;" width="13" height="11" viewBox="0 0 13 11"><rect x="1" y="1" width="2" height="2" fill="#afb1b3"/><rect x="4" y="1" width="8" height="2" fill="#afb1b3"/><rect x="1" y="4.5" width="2" height="2" fill="#afb1b3"/><rect x="4" y="4.5" width="8" height="2" fill="#afb1b3"/><rect x="1" y="8" width="2" height="2" fill="#afb1b3"/><rect x="4" y="8" width="8" height="2" fill="#afb1b3"/></svg>
<div class="vt" style="left:1378px;top:313px;color:#bbbbbb;font-size:11px;transform:rotate(90deg)">Assistant</div>
<svg class="bx" style="left:1365px;top:382px;" width="15" height="11" viewBox="0 0 15 11"><path d="M1 10 Q1 3 6 2.5 Q11 2 13 4 L14 6 L12 6 L12 10 H10 V8 H5 V10 H3 Z" fill="#afb1b3"/></svg>
<div class="vt" style="left:1378px;top:398px;color:#bbbbbb;font-size:11px;transform:rotate(90deg)">Gradle</div>
<svg class="bx" style="left:1365px;top:691px;" width="14" height="13" viewBox="0 0 14 13"><rect x="1" y="3" width="8" height="9" rx="1" fill="none" stroke="#afb1b3" stroke-width="1.2"/><rect x="6" y="1" width="6" height="6" fill="#3c3f41" stroke="#afb1b3" stroke-width="1.1"/></svg>
<div class="vt" style="left:1378px;top:708px;color:#bbbbbb;font-size:11px;transform:rotate(90deg)">Running Devices</div>
<svg class="bx" style="left:1366px;top:820px;" width="12" height="14" viewBox="0 0 12 14"><rect x="1.5" y="1" width="8" height="11.5" rx="1" fill="none" stroke="#afb1b3" stroke-width="1.3"/><rect x="1.5" y="9.5" width="8" height="1.3" fill="#afb1b3"/></svg>
<div class="vt" style="left:1378px;top:837px;color:#bbbbbb;font-size:11px;transform:rotate(90deg)">Device File Explorer</div>
<div class="bx" style="left:22px;top:621px;width:1338px;height:1px;background:#2d2f31;"></div>
<div class="bx" style="left:22px;top:622px;width:1338px;height:27px;background:#3d4957;"></div>
<div class="bx" style="left:22px;top:649px;width:1338px;height:1px;background:#323436;"></div>
<div class="a " style="left:27.4px;top:628.44px;font-size:12px;line-height:16px;color:#bbbbbb;letter-spacing:-0.488px;">Services</div>
<svg class="bx" style="left:1281px;top:629px;" width="16" height="16" viewBox="0 0 16 16"><circle cx="8" cy="8" r="6.2" fill="none" stroke="#afb1b3" stroke-width="1.6"/><path d="M8 1 V6 M8 10 V15 M1 8 H6 M10 8 H15" stroke="#afb1b3" stroke-width="1.6"/></svg>
<svg class="bx" style="left:1315.5px;top:629.5px;" width="13" height="13" viewBox="0 0 13 13"><rect x="5.15" y="0.3" width="3.2" height="12.40" rx="1" fill="#afb1b3" transform="rotate(0 6.5 6.5)"/><rect x="5.15" y="0.3" width="3.2" height="12.40" rx="1" fill="#afb1b3" transform="rotate(60 6.5 6.5)"/><rect x="5.15" y="0.3" width="3.2" height="12.40" rx="1" fill="#afb1b3" transform="rotate(120 6.5 6.5)"/><circle cx="6.5" cy="6.5" r="4.68" fill="#afb1b3"/><circle cx="6.5" cy="6.5" r="1.95" fill="#3c3f41"/></svg>
<div class="bx" style="left:1341.5px;top:635px;width:12.5px;height:2px;background:#afb1b3;"></div>
<div class="bx" style="left:22px;top:650px;width:1338px;height:299px;background:#3c3f41;"></div>
<div class="bx" style="left:50px;top:650px;width:1px;height:299px;background:#393c3e;"></div>
<div class="bx" style="left:443px;top:650px;width:1px;height:299px;background:#323436;"></div>
<div class="bx" style="left:51px;top:677px;width:392px;height:1px;background:#323436;"></div>
<svg class="bx" style="left:56px;top:656px;" width="14" height="15" viewBox="0 0 14 15"><rect x="1" y="0.5" width="12" height="2" fill="#4c4f51"/><rect x="1" y="12.5" width="12" height="2" fill="#4c4f51"/><path d="M3.5 6.5 L7 3.5 L10.5 6.5 Z M3.5 8 L7 11 L10.5 8 Z" fill="#4c4f51"/></svg>
<svg class="bx" style="left:82px;top:656px;" width="14" height="15" viewBox="0 0 14 15"><rect x="1" y="6.5" width="12" height="2" fill="#4c4f51"/><path d="M3 0.5 H11 L7 4.5 Z M3 14.5 H11 L7 10.5 Z" fill="#4c4f51"/></svg>
<div class="bx" style="left:105px;top:654px;width:1px;height:20px;background:#4b4e50;"></div>
<svg class="bx" style="left:115px;top:656px;" width="15" height="15" viewBox="0 0 15 15"><rect x="1" y="1" width="4" height="4" fill="#afb1b3"/><rect x="7" y="1" width="4" height="4" fill="#afb1b3"/><rect x="1" y="7" width="4" height="4" fill="#afb1b3"/><rect x="7" y="7" width="4" height="4" fill="#afb1b3"/><path d="M10 11 H14 L12 13.5 Z" fill="#afb1b3"/></svg>
<svg class="bx" style="left:140px;top:655px;" width="19" height="16" viewBox="0 0 19 16"><path d="M1.5 13 Q2.5 12.5 2.5 10 V4.5 Q2.5 1.5 5.5 1.5 H10.5 Q13.5 1.5 13.5 4.5 V10 Q13.5 12.5 14.5 13" fill="none" stroke="#afb1b3" stroke-width="1.3"/><path d="M5 7.5 H11 M8 4.5 V10.5" stroke="#afb1b3" stroke-width="1.6"/><path d="M11 13 H16 L13.5 15.5 Z" fill="#afb1b3"/></svg>
<div class="bx" style="left:165px;top:654px;width:1px;height:20px;background:#4b4e50;"></div>
<svg class="bx" style="left:174px;top:656px;" width="17" height="15" viewBox="0 0 17 15"><path d="M7 1.5 V11.5 M2 6.5 H12" stroke="#afb1b3" stroke-width="1.8"/><path d="M11 11 H15 L13 13.5 Z" fill="#afb1b3"/></svg>
<div class="a " style="left:183.7px;top:756.84px;font-size:12px;line-height:16px;color:#7b7e80;letter-spacing:-0.045px;">No services configured.</div>
<div class="a " style="left:183.7px;top:776.84px;font-size:12px;line-height:16px;color:#7b7e80;letter-spacing:-0.028px;"><span style="color:#5a92d6">Add service</span> (Alt+Insert)</div>
<div class="a " style="left:828.2px;top:745.84px;font-size:12px;line-height:16px;color:#7b7e80;letter-spacing:-0.179px;">Select service to view details</div>
<div class="bx" style="left:0px;top:949px;width:1384px;height:1px;background:#323436;"></div>
<div class="bx" style="left:0px;top:950px;width:1384px;height:42px;background:#3c3f41;"></div>
<div class="bx" style="left:715px;top:950px;width:77px;height:20px;background:#2f3133;"></div>
<svg class="bx" style="left:31px;top:955px;" width="12" height="13" viewBox="0 0 12 13"><path d="M3 1 V12 M3 6 Q8 6 9 2" fill="none" stroke="#afb1b3" stroke-width="1.6"/><circle cx="9" cy="2.5" r="1.6" fill="#afb1b3"/><circle cx="3" cy="2" r="1.6" fill="#afb1b3"/></svg>
<div class="a " style="left:48.7px;top:954.34px;font-size:12px;line-height:16px;color:#bbbbbb;letter-spacing:-0.053px;">Version Control</div>
<svg class="bx" style="left:152px;top:955px;" width="12" height="12" viewBox="0 0 12 12"><path d="M1 2 H2.5 M4 2 H11 M1 6 H2.5 M4 6 H11 M1 10 H2.5 M4 10 H11" stroke="#afb1b3" stroke-width="1.6"/></svg>
<div class="a " style="left:168.7px;top:954.34px;font-size:12px;line-height:16px;color:#bbbbbb;letter-spacing:-0.649px;">TODO</div>
<svg class="bx" style="left:221px;top:954px;" width="13" height="13" viewBox="0 0 13 13"><circle cx="6.5" cy="6.5" r="5.5" fill="#afb1b3"/><path d="M6.5 3 V7.5" stroke="#3c3f41" stroke-width="1.6"/><circle cx="6.5" cy="9.6" r="0.9" fill="#3c3f41"/></svg>
<div class="a " style="left:238.0px;top:954.34px;font-size:12px;line-height:16px;color:#bbbbbb;letter-spacing:-0.441px;">Problems</div>
<svg class="bx" style="left:306px;top:955px;" width="12" height="12" viewBox="0 0 12 12"><rect x="0.5" y="0.5" width="11" height="11" fill="#afb1b3"/><path d="M2.5 3 L5 5.5 L2.5 8 M6 8.5 H9.5" stroke="#3c3f41" stroke-width="1.3" fill="none"/></svg>
<div class="a " style="left:322.5px;top:954.34px;font-size:12px;line-height:16px;color:#bbbbbb;letter-spacing:-0.078px;">Terminal</div>
<svg class="bx" style="left:390px;top:954px;" width="13" height="14" viewBox="0 0 13 14"><ellipse cx="6.5" cy="8" rx="4" ry="5" fill="#afb1b3"/><path d="M1 5 H12 M1 9 H12 M2 13 L4 11.5 M11 13 L9 11.5" stroke="#afb1b3" stroke-width="1.3"/></svg>
<div class="a " style="left:406.8px;top:954.34px;font-size:12px;line-height:16px;color:#bbbbbb;letter-spacing:-0.045px;">App Inspection</div>
<svg class="bx" style="left:507px;top:955px;" width="13" height="12" viewBox="0 0 13 12"><path d="M1 2 H10 M1 6 H12 M1 10 H8" stroke="#afb1b3" stroke-width="1.8"/></svg>
<div class="a " style="left:524.4px;top:954.34px;font-size:12px;line-height:16px;color:#bbbbbb;letter-spacing:-0.406px;">Logcat</div>
<svg class="bx" style="left:580px;top:954px;" width="15" height="14" viewBox="0 0 15 14"><path d="M4 1.5 H11 L14 5 L7.5 13 L1 5 Z M1 5 H14 M5.5 5 L7.5 13 L9.5 5 M4 1.5 L5.5 5 L7.5 1.5 L9.5 5 L11 1.5" fill="none" stroke="#afb1b3" stroke-width="1.1"/></svg>
<div class="a " style="left:598.4px;top:954.34px;font-size:12px;line-height:16px;color:#bbbbbb;letter-spacing:-0.154px;">App Quality Insights</div>
<svg class="bx" style="left:725px;top:954px;" width="15" height="15" viewBox="0 0 15 15"><path d="M7.5 1 L13.5 4.5 V10.5 L7.5 14 L1.5 10.5 V4.5 Z" fill="#afb1b3"/><path d="M6 5 L10.5 7.5 L6 10 Z" fill="#2f3133"/></svg>
<div class="a " style="left:743.5px;top:954.34px;font-size:12px;line-height:16px;color:#dddddd;letter-spacing:-0.845px;">Services</div>
<svg class="bx" style="left:802px;top:953px;" width="15" height="16" viewBox="0 0 15 16"><path d="M1 5 L5 1 L8 4 L6.5 5.5 L12 11 L10.5 12.5 L5 7 L3.5 8.5 Z" fill="#afb1b3"/><circle cx="12" cy="12.5" r="2.3" fill="#4cc38a"/></svg>
<div class="a " style="left:819.4px;top:954.34px;font-size:12px;line-height:16px;color:#bbbbbb;letter-spacing:-0.221px;">Build</div>
<svg class="bx" style="left:4px;top:975px;" width="14" height="14" viewBox="0 0 14 14"><rect x="3.5" y="1.5" width="9.5" height="9.5" fill="none" stroke="#afb1b3" stroke-width="1.2"/><path d="M1 3.5 V13 H10.5" fill="none" stroke="#afb1b3" stroke-width="1.2"/></svg>
<div class="a " style="left:26.2px;top:974.34px;font-size:12px;line-height:16px;color:#bbbbbb;letter-spacing:-0.134px;">Gradle sync started (3 minutes ago)</div>
<div class="a " style="left:816.0px;top:973.84px;font-size:12px;line-height:16px;color:#bbbbbb;letter-spacing:-0.161px;">Gradle: Build model...</div>
<div class="bx" style="left:936px;top:980px;width:146px;height:4px;background:#8c8e90;border-radius:2px;background:linear-gradient(#9a9c9e,#7a7c7e);"></div>
<svg class="bx" style="left:1087px;top:975px;" width="14" height="14" viewBox="0 0 14 14"><circle cx="7" cy="7" r="6.3" fill="#55585a"/><path d="M4.5 4.5 L9.5 9.5 M9.5 4.5 L4.5 9.5" stroke="#3c3f41" stroke-width="1.4"/></svg>
<div class="a " style="left:1111.5px;top:973.84px;font-size:12px;line-height:16px;color:#5a92d6;letter-spacing:-0.215px;">Show all (2)</div>
<div class="a " style="left:1185.2px;top:973.84px;font-size:12px;line-height:16px;color:#bbbbbb;letter-spacing:-0.991px;">1:1</div>
<div class="a " style="left:1212.6px;top:973.84px;font-size:12px;line-height:16px;color:#bbbbbb;letter-spacing:-2.104px;">LF</div>
<div class="a " style="left:1236.0px;top:973.84px;font-size:12px;line-height:16px;color:#bbbbbb;letter-spacing:-0.549px;">UTF-8</div>
<div class="a " style="left:1278.9px;top:973.84px;font-size:12px;line-height:16px;color:#bbbbbb;letter-spacing:-0.533px;">4 spaces</div>
<svg class="bx" style="left:1333px;top:975px;" width="13" height="13" viewBox="0 0 13 13"><path d="M2 6 V4 A3 3 0 0 1 8 4" fill="none" stroke="#afb1b3" stroke-width="1.5"/><rect x="4" y="6.5" width="8" height="6" fill="#afb1b3"/></svg>
<svg class="bx" style="left:1358px;top:975px;" width="14" height="13" viewBox="0 0 14 13"><path d="M1 1 H13 V10 H7 L4 12.5 V10 H1 Z" fill="#afb1b3"/><path d="M7 3 V6.5" stroke="#3c3f41" stroke-width="1.6"/><circle cx="7" cy="8.3" r="0.9" fill="#3c3f41"/></svg>
<div class="bx" style="left:1383px;top:0px;width:1px;height:950px;background:#2c2e30;"></div>
<svg class="bx" style="left:627px;top:964px;" width="132" height="19" viewBox="0 0 132 19"><g fill="none" stroke="#000000" stroke-opacity="0.45" stroke-width="4.2" stroke-linejoin="round">
<path d="M2 16 V2 L11.5 16 V2" />
<path d="M15.8 3.8 H22.4 M16 16 V9 Q16 7.3 17.7 7.3 H20.9 Q22.6 7.3 22.6 9 V14.3 Q22.6 16 20.9 16 H17.7 Q16 16 16 14.3 Z" />
<path d="M26.5 16 V2 L36.5 16 V2" />
<path d="M41.2 4.5 H47.5 V16 H43 Q41.2 16 41.2 14 V12.3 Q41.2 10.5 43 10.5 H47.3" />
<path d="M53.5 16 V2.5 L60.8 12 L68 2.5 V16" />
<path d="M70.5 12 H79.5 V9.5 Q79.5 7.5 77.5 7.5 H73 Q71 7.5 71 9.5 V12 M71 16.2 H79.8" />
<path d="M97.5 2 H89.5 Q87.5 2 87.5 4 V14 Q87.5 16 89.5 16 H97.5" />
<path d="M102.2 1 V16" />
<path d="M106.5 7 V14 Q106.5 16 108.5 16 H113.5 Q115.5 16 115.5 14 V7 M106.5 17 H115.5" />
<path d="M118.8 1.5 V16 H125.5 Q128 16 128 13.5 V10 Q128 7.5 125.5 7.5 H119" />
</g><g fill="none" stroke="#ffffff" stroke-width="2.6" stroke-linejoin="bevel">
<path d="M2 16 V2 L11.5 16 V2" />
<path d="M15.8 3.8 H22.4 M16 16 V9 Q16 7.3 17.7 7.3 H20.9 Q22.6 7.3 22.6 9 V14.3 Q22.6 16 20.9 16 H17.7 Q16 16 16 14.3 Z" />
<path d="M26.5 16 V2 L36.5 16 V2" />
<path d="M41.2 4.5 H47.5 V16 H43 Q41.2 16 41.2 14 V12.3 Q41.2 10.5 43 10.5 H47.3" />
<path d="M53.5 16 V2.5 L60.8 12 L68 2.5 V16" />
<path d="M70.5 12 H79.5 V9.5 Q79.5 7.5 77.5 7.5 H73 Q71 7.5 71 9.5 V12 M71 16.2 H79.8" />
<path d="M97.5 2 H89.5 Q87.5 2 87.5 4 V14 Q87.5 16 89.5 16 H97.5" />
<path d="M102.2 1 V16" />
<path d="M106.5 7 V14 Q106.5 16 108.5 16 H113.5 Q115.5 16 115.5 14 V7 M106.5 17 H115.5" />
<path d="M118.8 1.5 V16 H125.5 Q128 16 128 13.5 V10 Q128 7.5 125.5 7.5 H119" />
</g></svg>
<div class="bx" style="left:530px;top:335px;width:306px;height:321px;background:#3c3f41;border:1px solid #5a5d5f;box-shadow:0 2px 6px rgba(0,0,0,0.35);"></div>
<div class="bx" style="left:531px;top:336px;width:304px;height:24px;background:#46494b;"></div>
<div class="a " style="left:640.4px;top:339.54px;font-size:12px;line-height:16px;color:#bbbbbb;letter-spacing:-0.206px;">New Scratch File</div>
<div class="bx" style="left:531px;top:360px;width:304px;height:295px;overflow:hidden">
<div class="a" style="left:34.3px;top:5.84px;font-size:12px;line-height:16px;color:#bbbbbb;letter-spacing:-0.128px;">From selected view</div>
<div class="bx" style="left:5px;top:26px;width:283px;height:1px;background:#4e5153;"></div>
<div class="bx" style="left:0px;top:209px;width:290px;height:20px;background:#4b6eaf;"></div>
<div class="a" style="left:34.3px;top:31.04px;font-size:12px;line-height:16px;color:#bbbbbb;letter-spacing:0.059px;">.gitignore (GitIgnore)</div>
<svg class="bx" style="left:13px;top:31px" width="16" height="16" viewBox="0 0 16 16"><path d="M1 5.6 L5.6 1 V5.6 Z" fill="#9a9da0"/><path d="M1 7 H7 V1 H10.5 V14.5 H1 Z" fill="#9a9da0"/><circle cx="11.5" cy="11.5" r="4.5" fill="#3c3f41"/><circle cx="11.5" cy="11.5" r="3.3" fill="none" stroke="#9a9da0" stroke-width="1.2"/><path d="M9.3 13.7 L13.7 9.3" stroke="#9a9da0" stroke-width="1.2"/></svg>
<div class="a" style="left:34.3px;top:51.04px;font-size:12px;line-height:16px;color:#bbbbbb;letter-spacing:0.072px;">.hgignore (HgIgnore)</div>
<svg class="bx" style="left:13px;top:51px" width="16" height="16" viewBox="0 0 16 16"><path d="M1 5.6 L5.6 1 V5.6 Z" fill="#9a9da0"/><path d="M1 7 H7 V1 H10.5 V14.5 H1 Z" fill="#9a9da0"/><circle cx="11.5" cy="11.5" r="4.5" fill="#3c3f41"/><circle cx="11.5" cy="11.5" r="3.3" fill="none" stroke="#9a9da0" stroke-width="1.2"/><path d="M9.3 13.7 L13.7 9.3" stroke="#9a9da0" stroke-width="1.2"/></svg>
<div class="a" style="left:34.3px;top:71.04px;font-size:12px;line-height:16px;color:#bbbbbb;letter-spacing:-0.034px;">.ignore (IgnoreLang)</div>
<svg class="bx" style="left:13px;top:71px" width="16" height="16" viewBox="0 0 16 16"><path d="M1 5.6 L5.6 1 V5.6 Z" fill="#9a9da0"/><path d="M1 7 H7 V1 H10.5 V14.5 H1 Z" fill="#9a9da0"/><circle cx="11.5" cy="11.5" r="4.5" fill="#3c3f41"/><circle cx="11.5" cy="11.5" r="3.3" fill="none" stroke="#9a9da0" stroke-width="1.2"/><path d="M9.3 13.7 L13.7 9.3" stroke="#9a9da0" stroke-width="1.2"/></svg>
<div class="a" style="left:34.3px;top:91.04px;font-size:12px;line-height:16px;color:#bbbbbb;letter-spacing:-0.206px;">AGSL (Android Graphics Shading Language)</div>
<svg class="bx" style="left:13px;top:93px" width="16" height="12" viewBox="0 0 16 12"><path d="M1 11 A7 7 0 0 1 15 11 Z" fill="#4cc38a"/><line x1="3.5" y1="1.5" x2="5.2" y2="5" stroke="#4cc38a" stroke-width="1.3"/><line x1="12.5" y1="1.5" x2="10.8" y2="5" stroke="#4cc38a" stroke-width="1.3"/><circle cx="5.3" cy="8.3" r="0.9" fill="#3c3f41"/><circle cx="10.7" cy="8.3" r="0.9" fill="#3c3f41"/></svg>
<div class="a" style="left:34.3px;top:111.04px;font-size:12px;line-height:16px;color:#bbbbbb;letter-spacing:-0.559px;">AIDL</div>
<svg class="bx" style="left:13px;top:113px" width="16" height="12" viewBox="0 0 16 12"><path d="M1 11 A7 7 0 0 1 15 11 Z" fill="#4cc38a"/><line x1="3.5" y1="1.5" x2="5.2" y2="5" stroke="#4cc38a" stroke-width="1.3"/><line x1="12.5" y1="1.5" x2="10.8" y2="5" stroke="#4cc38a" stroke-width="1.3"/><circle cx="5.3" cy="8.3" r="0.9" fill="#3c3f41"/><circle cx="10.7" cy="8.3" r="0.9" fill="#3c3f41"/></svg>
<div class="a" style="left:34.3px;top:131.04px;font-size:12px;line-height:16px;color:#bbbbbb;letter-spacing:0.080px;">AndroidDataBinding</div>
<svg class="bx" style="left:13px;top:131px" width="16" height="16" viewBox="0 0 16 16"><path d="M1 5.6 L5.6 1 V5.6 Z" fill="#9a9da0"/><path d="M1 7 H7 V1 H10.5 V14.5 H1 Z" fill="#9a9da0"/><rect x="6" y="7" width="10" height="9" fill="#3c3f41"/><circle cx="11" cy="9.5" r="2.2" fill="#5fb8e8"/><path d="M6.5 16 A4.5 4 0 0 1 15.5 16 Z" fill="#5fb8e8"/></svg>
<div class="a" style="left:34.3px;top:151.04px;font-size:12px;line-height:16px;color:#bbbbbb;letter-spacing:-0.503px;">ASM</div>
<svg class="bx" style="left:13px;top:151px" width="16" height="16" viewBox="0 0 16 16"><path d="M3 0.5 H9 L12 3.5 V9 H3 Z" fill="#9a9da0"/><rect x="0" y="9" width="16" height="7" fill="#2f6aa3"/><text x="8" y="15" font-size="6.5" font-family="Liberation Sans" font-weight="bold" fill="#ffffff" text-anchor="middle">ASM</text></svg>
<div class="a" style="left:34.3px;top:171.04px;font-size:12px;line-height:16px;color:#bbbbbb;letter-spacing:0.008px;">AspectJ (syntax highlighting only) (*.aj)</div>
<svg class="bx" style="left:13px;top:171px" width="16" height="16" viewBox="0 0 16 16"><path d="M1 5.6 L5.6 1 V5.6 Z" fill="#9a9da0"/><path d="M1 7 H7 V1 H10.5 V14.5 H1 Z" fill="#9a9da0"/><rect x="6" y="7" width="10" height="9" fill="#3c3f41"/><circle cx="11" cy="9.5" r="2.2" fill="#5fb8e8"/><path d="M6.5 16 A4.5 4 0 0 1 15.5 16 Z" fill="#5fb8e8"/></svg>
<div class="a" style="left:34.3px;top:191.04px;font-size:12px;line-height:16px;color:#bbbbbb;letter-spacing:-0.221px;">C# (*.cs)</div>
<svg class="bx" style="left:13px;top:191px" width="16" height="16" viewBox="0 0 16 16"><path d="M1 5.6 L5.6 1 V5.6 Z" fill="#9a9da0"/><path d="M1 7 H7 V1 H10.5 V14.5 H1 Z" fill="#9a9da0"/><rect x="6" y="7" width="10" height="9" fill="#3c3f41"/><circle cx="11" cy="9.5" r="2.2" fill="#5fb8e8"/><path d="M6.5 16 A4.5 4 0 0 1 15.5 16 Z" fill="#5fb8e8"/></svg>
<div class="a" style="left:34.3px;top:211.04px;font-size:12px;line-height:16px;color:#c4c4c4;letter-spacing:0.480px;">C/C++</div>
<svg class="bx" style="left:13px;top:211px" width="16" height="16" viewBox="0 0 16 16"><path d="M3 0.5 H9 L12 3.5 V8 H3 Z" fill="#c7c9cb"/><rect x="0" y="8" width="16" height="8" fill="#7b5bc9"/><text x="8" y="15" font-size="7" font-family="Liberation Sans" font-weight="bold" fill="#ffffff" text-anchor="middle">C++</text></svg>
<div class="a" style="left:34.3px;top:231.04px;font-size:12px;line-height:16px;color:#bbbbbb;letter-spacing:-0.053px;">CMake</div>
<svg class="bx" style="left:13px;top:231px" width="16" height="16" viewBox="0 0 16 16"><path d="M8 0.5 L15.5 15 H0.5 Z" fill="#2e8b3a"/><path d="M8 0.5 L15.5 15 L8 10 Z" fill="#d23b3b"/><path d="M8 0.5 L0.5 15 L8 10 Z" fill="#3a58c8"/><path d="M0.5 15 H15.5 L8 10 Z" fill="#3db64e"/></svg>
<div class="a" style="left:34.3px;top:251.04px;font-size:12px;line-height:16px;color:#bbbbbb;letter-spacing:-0.267px;">CMakeCache</div>
<svg class="bx" style="left:13px;top:251px" width="16" height="16" viewBox="0 0 16 16"><path d="M1 5.6 L5.6 1 V5.6 Z" fill="#9a9da0"/><path d="M1 7 H7 V1 H10.5 V14.5 H1 Z" fill="#9a9da0"/><rect x="6" y="7" width="10" height="9" fill="#3c3f41"/><circle cx="11.5" cy="11.5" r="3.2" fill="#5fb8e8"/><path d="M11.5 7 V16 M7 11.5 H16 M8.3 8.3 L14.7 14.7 M14.7 8.3 L8.3 14.7" stroke="#5fb8e8" stroke-width="1.4"/><circle cx="11.5" cy="11.5" r="1.2" fill="#3c3f41"/></svg>
<div class="a" style="left:34.3px;top:271.04px;font-size:12px;line-height:16px;color:#bbbbbb;letter-spacing:-0.110px;">Compose Preview Device specification</div>
<svg class="bx" style="left:13px;top:271px" width="16" height="16" viewBox="0 0 16 16"><path d="M2 1 H8 L11 4 V15 H2 Z" fill="#9a9da0"/><path d="M4 6 H9 M4 8.5 H9 M4 11 H9" stroke="#3c3f41" stroke-width="1"/></svg>
<div class="a" style="left:34.3px;top:291.04px;font-size:12px;line-height:16px;color:#bbbbbb;letter-spacing:0.754px;">CSS (syntax highlighting only) (*.css)</div>
<svg class="bx" style="left:13px;top:291px" width="16" height="16" viewBox="0 0 16 16"><path d="M2 1 H8 L11 4 V15 H2 Z" fill="#9a9da0"/><path d="M4 6 H9 M4 8.5 H9 M4 11 H9" stroke="#3c3f41" stroke-width="1"/></svg>
<div class="bx" style="left:295px;top:1px;width:8px;height:75px;background:#5a5d5f;border-radius:1px;"></div>
</div>
</body></html>
